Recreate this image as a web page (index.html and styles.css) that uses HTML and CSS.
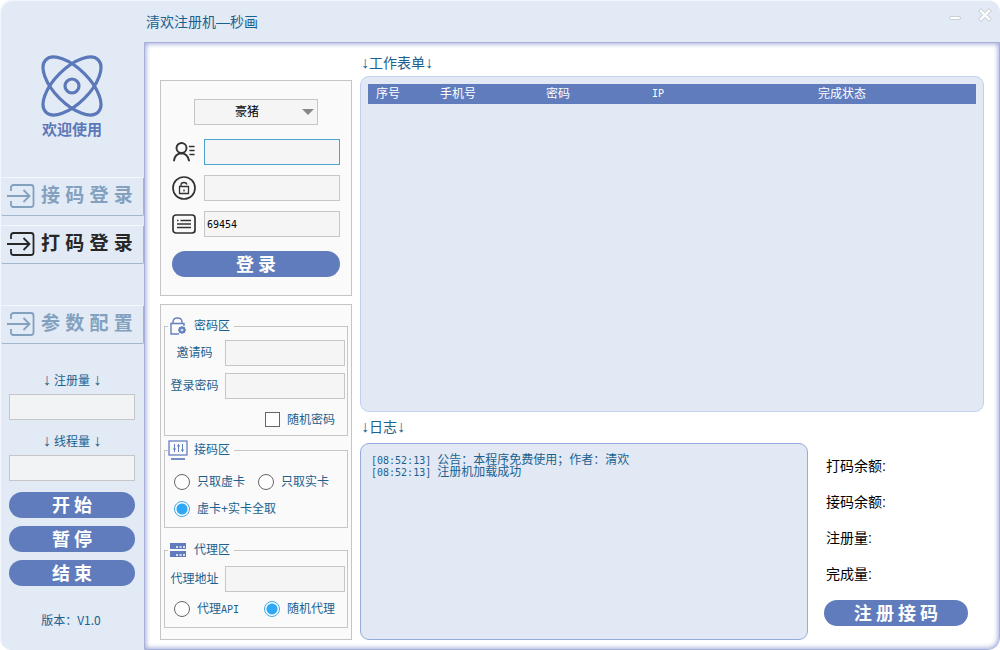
FILE: index.html
```html
<!DOCTYPE html>
<html lang="zh-CN">
<head>
<meta charset="utf-8">
<title>清欢注册机—秒画</title>
<link rel="stylesheet" href="styles.css">
</head>
<body>
<div class="window">
  <aside class="sidebar">
    <div class="logo">
      <svg width="64" height="64" viewBox="0 0 64 64" fill="none" stroke="#5b78b9" stroke-width="3.2">
        <ellipse cx="32" cy="32" rx="37" ry="17.500" transform="rotate(45 32 32)"/>
        <ellipse cx="32" cy="32" rx="37" ry="17.500" transform="rotate(-45 32 32)"/>
        <circle cx="32" cy="32" r="7"/>
      </svg>
      <span>欢迎使用</span>
    </div>
    <nav class="nav">
      <button class="nav-item" type="button"><svg class="enter" viewBox="0 0 28 26"><path d="M4 8V4.500Q4 2 6.500 2H24Q26.500 2 26.500 4.500V21.500Q26.500 24 24 24H6.500Q4 24 4 21.500V18M0 13H22.500M16.500 7L22.500 13L16.500 19"/></svg>接 码 登 录</button>
      <button class="nav-item active" type="button"><svg class="enter" viewBox="0 0 28 26"><path d="M4 8V4.500Q4 2 6.500 2H24Q26.500 2 26.500 4.500V21.500Q26.500 24 24 24H6.500Q4 24 4 21.500V18M0 13H22.500M16.500 7L22.500 13L16.500 19"/></svg>打 码 登 录</button>
      <button class="nav-item config" type="button"><svg class="enter" viewBox="0 0 28 26"><path d="M4 8V4.500Q4 2 6.500 2H24Q26.500 2 26.500 4.500V21.500Q26.500 24 24 24H6.500Q4 24 4 21.500V18M0 13H22.500M16.500 7L22.500 13L16.500 19"/></svg>参 数 配 置</button>
    </nav>
    <div class="controls">
      <label for="reg-count"><span class="arrow">↓</span> 注册量 <span class="arrow">↓</span></label>
      <input class="field" id="reg-count" type="text">
      <label for="thread-count"><span class="arrow">↓</span> 线程量 <span class="arrow">↓</span></label>
      <input class="field" id="thread-count" type="text">
      <div class="actions">
        <button class="pill" type="button">开 始</button>
        <button class="pill" type="button">暂 停</button>
        <button class="pill" type="button">结 束</button>
      </div>
    </div>
    <p class="version">版本：V1.0</p>
  </aside>

  <header class="titlebar">
    <h1>清欢注册机—秒画</h1>
    <div class="window-buttons">
      <button type="button" aria-label="最小化"><svg width="14" height="14" viewBox="0 0 14 14"><rect x="1.500" y="8.500" width="11" height="3" rx="1.500" fill="#fff" stroke="#c9cfd6"/></svg></button>
      <button type="button" aria-label="关闭"><svg width="14" height="14" viewBox="0 0 14 14"><path d="M3 3L11 11M11 3L3 11" stroke="#c9cfd6" stroke-width="4.200" stroke-linecap="square"/><path d="M3 3L11 11M11 3L3 11" stroke="#fff" stroke-width="2.400" stroke-linecap="square"/></svg></button>
    </div>
  </header>

  <main class="main">
    <div class="forms">
      <form class="card login">
        <div class="select">
          <select aria-label="平台"><option>豪猪</option></select>
        </div>
        <div class="login-fields">
          <div class="login-row">
            <label for="user"><svg width="24" height="24" viewBox="0 0 24 24" fill="none" stroke="#333" stroke-width="1.900" stroke-linecap="round"><circle cx="9.500" cy="8" r="5"/><path d="M2 20.500Q3 13.500 9.500 13.200Q15.500 13.500 17 20.500"/><path d="M17.500 6.500H22M18 10.500H22M18 14.500H22" stroke-width="1.500"/></svg></label>
            <input class="field focused" id="user" type="text">
          </div>
          <div class="login-row">
            <label for="pass"><svg width="24" height="24" viewBox="0 0 24 24" fill="none" stroke="#333"><circle cx="12" cy="12" r="11" stroke-width="1.700"/><path d="M7.500 10.500H16.500V17.500H7.500ZM9 10.500V9Q9 6.500 12 6.500Q14.500 6.500 15 8.500M12 13.500V15.500" stroke-width="1.300"/></svg></label>
            <input class="field" id="pass" type="password">
          </div>
          <div class="login-row">
            <label for="code"><svg width="24" height="24" viewBox="0 0 24 24" fill="none" stroke="#333" stroke-width="1.700"><rect x="1" y="3" width="22" height="18" rx="3"/><path d="M5 8.500H6.500M8.500 8.500H19M5 12H19M5 15.500H19" stroke-width="1.400"/></svg></label>
            <input class="field" id="code" type="text" value="69454">
          </div>
        </div>
        <button class="pill" type="button">登 录</button>
      </form>

      <form class="card settings">
        <fieldset class="passwords">
          <legend><svg width="20" height="20" viewBox="0 0 20 20" fill="none" stroke="#6580bf" stroke-width="1.400"><path d="M16 10V7.500H3V18H11M5 7.500V6Q5 2 9.500 2Q14 2 14 6V7.500"/><circle cx="14" cy="14" r="2.600" stroke-width="2"/><path d="M14 10V18M10 14H18M11.200 11.200L16.800 16.800M16.800 11.200L11.200 16.800" stroke-width="1"/><circle cx="14" cy="14" r="1" fill="#fff" stroke="none"/></svg>密码区</legend>
          <div class="row"><label for="invite">邀请码</label><input class="field" id="invite" type="text"></div>
          <div class="row"><label for="login-pass">登录密码</label><input class="field" id="login-pass" type="text"></div>
          <div class="choices end"><label class="choice"><input type="checkbox">随机密码</label></div>
        </fieldset>
        <fieldset>
          <legend><svg width="20" height="20" viewBox="0 0 20 20" fill="none" stroke="#6580bf"><rect x="1" y="1" width="18" height="14" stroke-width="1.300"/><path d="M3 19H17" stroke-width="1.800"/><path d="M6.500 4V12M10.500 4V12M14.500 4V12M5 9H8M9 6H12M13 10H16" stroke-width="1"/></svg>接码区</legend>
          <div class="choices cards">
            <label class="choice"><input type="radio" name="card">只取虚卡</label>
            <label class="choice"><input type="radio" name="card">只取实卡</label>
          </div>
          <div class="choices"><label class="choice"><input type="radio" name="card" checked>虚卡+实卡全取</label></div>
        </fieldset>
        <fieldset class="proxy">
          <legend><svg width="20" height="20" viewBox="0 0 20 20"><path d="M2 3H18V9H2ZM2 11H18V17H2Z" fill="#607cbc"/><path d="M8 7H10M11.500 7H13.500M15 7H17M8 15H10M11.500 15H13.500M15 15H17" stroke="#fff" stroke-width="1.300"/></svg>代理区</legend>
          <div class="row"><label for="proxy">代理地址</label><input class="field" id="proxy" type="text"></div>
          <div class="choices spread">
            <label class="choice"><input type="radio" name="proxy-mode"><span>代理<span class="mono">API</span></span></label>
            <label class="choice"><input type="radio" name="proxy-mode" checked>随机代理</label>
          </div>
        </fieldset>
      </form>
    </div>

    <div class="work">
      <h2><span class="arrow">↓</span>工作表单<span class="arrow">↓</span></h2>
      <section class="panel table-panel">
        <table>
          <colgroup><col class="c-index"><col class="c-mid"><col class="c-mid"><col class="c-mid"><col></colgroup>
          <thead><tr><th>序号</th><th>手机号</th><th>密码</th><th class="mono">IP</th><th>完成状态</th></tr></thead>
        </table>
      </section>
      <h2 class="log-title"><span class="arrow">↓</span>日志<span class="arrow">↓</span></h2>
      <div class="bottom">
        <section class="panel log">
          <p><span class="mono">[08:52:13] </span>公告：本程序免费使用；作者：清欢</p>
          <p><span class="mono">[08:52:13] </span>注册机加载成功</p>
        </section>
        <section class="stats">
          <p>打码余额:</p>
          <p>接码余额:</p>
          <p>注册量:</p>
          <p>完成量:</p>
          <button class="pill" type="button">注 册 接 码</button>
        </section>
      </div>
    </div>
  </main>
</div>
</body>
</html>
```
FILE: styles.css
```css
* {
  box-sizing: border-box;
}

body {
  margin: 0;
  background: #fff;
  color: #1b618f;
  font: 12px/16px "Liberation Sans", "Noto Sans CJK SC", sans-serif;
}

h1, h2, p {
  margin: 0;
  font-weight: normal;
}

h1, h2 {
  font-size: 14px;
}

button, input, select {
  margin: 0;
  font: inherit;
}

svg {
  display: block;
  flex: none;
}

.arrow {
  font-size: 16px;
  line-height: 1;
}

.window {
  display: grid;
  grid-template-columns: 144px 1fr;
  grid-template-rows: 42px 1fr;
  min-height: 100vh;
  overflow: hidden;
  border-radius: 12px;
  background: #e2eaf5;
  box-shadow: inset 1px 1px 1px #f5f9fe;
}

/* Sidebar */

.sidebar {
  grid-row: 1 / 3;
  display: flex;
  flex-direction: column;
  padding-top: 54px;
}

.logo {
  display: flex;
  flex-direction: column;
  align-items: center;
  gap: 1px;
  color: #5b78b9;
  font: bold 15px/20px "Noto Sans CJK SC", sans-serif;
}

.nav {
  display: flex;
  flex-direction: column;
  gap: 9px;
  margin: 38px 0 0 1px;
}

.nav-item {
  display: flex;
  align-items: center;
  gap: 6px;
  height: 39px;
  padding: 0 0 2px 6px;
  border: 0;
  border-top: 1px solid #f3f8fd;
  border-right: 1px solid #9fb8d0;
  border-bottom: 1px solid #9fb8d0;
  border-radius: 2px;
  background: #e2eaf5;
  color: #83a1bf;
  font: bold 19px/24px "Liberation Sans", "Noto Sans CJK SC", sans-serif;
  white-space: nowrap;
}

.nav-item.active {
  color: #272727;
}

.nav-item.config {
  margin-top: 32px;
}

.enter {
  width: 28px;
  height: 26px;
  fill: none;
  stroke: currentColor;
  stroke-width: 1.8;
}

.controls {
  display: flex;
  flex-direction: column;
  margin-top: 28px;
  padding: 0 9px;
}

.controls label {
  height: 16px;
  margin-bottom: 6px;
  text-align: center;
}

.controls .field {
  margin-bottom: 13px;
  background: #f1f3f5;
}

.actions {
  display: flex;
  flex-direction: column;
  gap: 8px;
  margin-top: -2px;
}

.version {
  margin-top: 26px;
  padding-right: 2px;
  text-align: center;
  font-family: "Noto Sans CJK SC", sans-serif;
}

/* Shared controls */

.field {
  width: 100%;
  min-width: 0;
  height: 26px;
  padding: 0 2px;
  border: 1px solid #c6c6c6;
  background: #f5f5f5;
  color: #000;
  outline: none;
}

.field.focused {
  border-color: #4aa5cf;
}

.pill {
  height: 26px;
  padding: 0 0 2px;
  border: 0;
  border-radius: 13px;
  background: #607cbc;
  color: #fff;
  font: bold 18px/24px "Noto Sans CJK SC", sans-serif;
}

.mono, #code {
  font-family: "DejaVu Sans Mono", monospace;
  font-size: 10px;
  white-space: pre;
}

/* Title bar */

.titlebar {
  display: flex;
  justify-content: space-between;
  padding: 0 8px 0 2px;
}

.titlebar h1 {
  line-height: 44px;
}

.window-buttons {
  display: flex;
  gap: 16px;
  padding-top: 8px;
}

.window-buttons button {
  height: 14px;
  padding: 0;
  border: 0;
  background: none;
}

/* Main area */

.main {
  display: grid;
  grid-template-columns: 192px 1fr;
  gap: 8px;
  padding: 9px 15px;
  border: 1px solid #a8b0d8;
  border-radius: 0 0 12px 0;
  background: #fff;
  box-shadow: inset 0 0 5px 1px #a4abdc;
}

.forms {
  display: flex;
  flex-direction: column;
  gap: 8px;
  padding-top: 28px;
}

.card {
  display: flex;
  flex-direction: column;
  border: 1px solid #c6c6c6;
  background: #fafafa;
}

.login {
  padding: 18px 11px;
}

.select {
  position: relative;
  width: 124px;
  margin: 0 auto 14px 22px;
}

.select select {
  appearance: none;
  width: 100%;
  height: 26px;
  padding: 0 18px 0 0;
  border: 1px solid #c6c6c6;
  border-radius: 0;
  background: #f5f5f5;
  color: #000;
  text-align-last: center;
}

.select::after {
  content: "";
  position: absolute;
  top: 10px;
  right: 4px;
  border: 6px solid transparent;
  border-top-color: #888;
  border-bottom: 0;
  pointer-events: none;
}

.login-fields {
  display: flex;
  flex-direction: column;
  gap: 10px;
  margin-bottom: 14px;
}

.login-row {
  display: flex;
  align-items: center;
  gap: 8px;
}

.settings {
  flex: 1;
  padding: 9px 3px;
}

fieldset {
  min-width: 0;
  margin: 0 0 2px;
  padding: 0 2px 8px 3px;
  border: 1px solid #c6c6c6;
}

fieldset.passwords {
  padding-bottom: 2px;
}

fieldset.proxy {
  margin-top: 8px;
}

legend {
  display: flex;
  align-items: center;
  gap: 6px;
  height: 24px;
  padding: 0 4px 0 0;
}

.row {
  display: flex;
  align-items: center;
  gap: 4px;
  margin: 2px 0 7px;
}

.row + .row {
  margin-top: 0;
}

.row label {
  flex: none;
  width: 53px;
  text-align: center;
}

.proxy .row {
  margin-top: 4px;
}

.choices {
  display: flex;
  align-items: center;
  height: 27px;
  padding: 0 10px 0 6px;
}

.cards {
  gap: 13px;
  margin-top: 6px;
}

.cards + .choices {
  margin-bottom: -3px;
}

.spread {
  justify-content: space-between;
  height: 20px;
}

.end {
  justify-content: flex-end;
}

.choice {
  display: flex;
  align-items: center;
  gap: 7px;
  white-space: nowrap;
}

.choice input {
  appearance: none;
  width: 16px;
  height: 16px;
  border: 1px solid #666;
  background: #fff;
}

.choice [type="checkbox"] {
  width: 15px;
  height: 15px;
}

.choice [type="radio"] {
  border-radius: 50%;
}

.choice [type="radio"]:checked {
  border-color: #43a7e0;
  background: radial-gradient(circle, #2fa8f8 5px, #fff 6px);
}

.work {
  display: flex;
  flex-direction: column;
  min-width: 0;
}

.work h2 {
  height: 24px;
  padding-left: 1px;
  line-height: 22px;
}

.work .log-title {
  height: 31px;
  line-height: 30px;
}

.panel {
  border: 1px solid #c3d0ee;
  border-radius: 9px;
  background: #e2e9f5;
}

.table-panel {
  flex: 1;
  padding: 7px;
}

table {
  width: 100%;
  table-layout: fixed;
  border-collapse: collapse;
  background: #607cbc;
  color: #fff;
}

.c-index {
  width: 40px;
}

.c-mid {
  width: 100px;
}

th {
  height: 20px;
  padding: 0;
  font-weight: normal;
}

.bottom {
  display: grid;
  grid-template-columns: 1fr 160px;
  gap: 16px;
  min-height: 197px;
}

.log {
  padding: 10px;
  border-color: #94abdb;
  line-height: 12px;
}

.log p {
  height: 12px;
}

.stats {
  display: flex;
  flex-direction: column;
  padding: 5px 16px 0 0;
  color: #000;
  font-size: 14px;
}

.stats p {
  padding-left: 2px;
  line-height: 36px;
}

.stats .pill {
  margin-top: 8px;
}
```
